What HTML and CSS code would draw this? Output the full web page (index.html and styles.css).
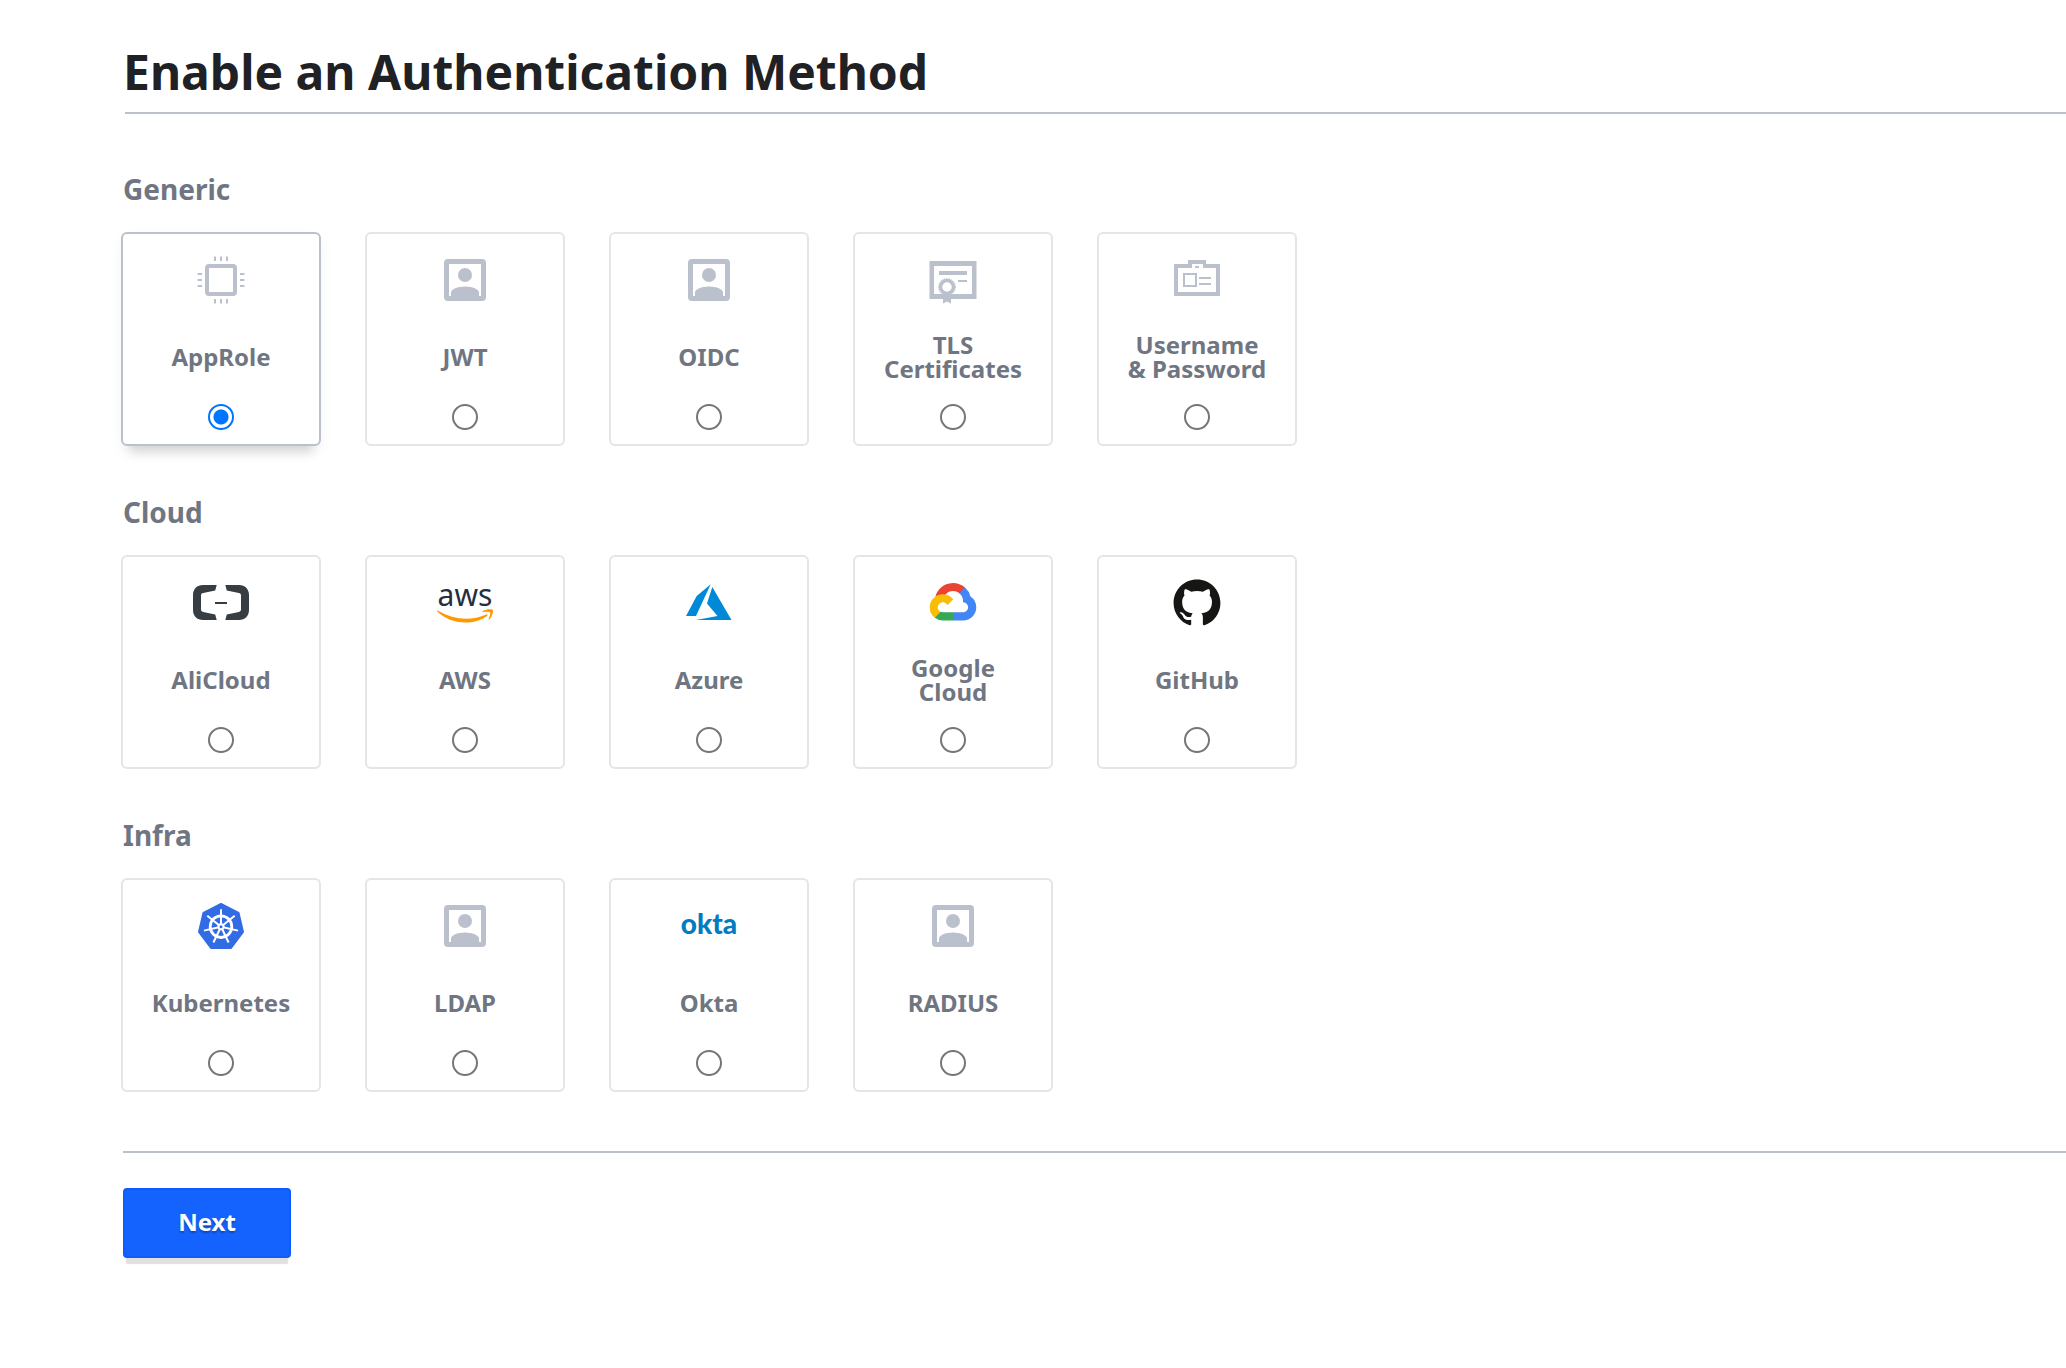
FILE: index.html
```html
<!DOCTYPE html>
<html lang="en">
<head>
<meta charset="utf-8">
<meta name="viewport" content="width=device-width, initial-scale=1">
<title>Enable an Authentication Method</title>
<link rel="stylesheet" href="styles.css">
</head>
<body>
<svg class="sprite" aria-hidden="true">
  <symbol id="user-square" viewBox="0 0 48 48">
    <path fill-rule="evenodd" d="M7 3h34a4 4 0 0 1 4 4v34a4 4 0 0 1-4 4H7a4 4 0 0 1-4-4V7a4 4 0 0 1 4-4zM8 8v32h2v-3.500c0-3.200 6.500-6 14-6s14 2.800 14 6V40h2V8z"/>
    <circle cx="24" cy="19" r="7"/>
  </symbol>
</svg>
<main class="page">
  <header class="page-header">
    <h1 class="title">Enable an Authentication Method</h1>
  </header>
  <form class="methods">
    <section class="group">
      <h2 class="group-title">Generic</h2>
      <div class="cards">
        <label class="card">
          <svg class="icon" viewBox="0 0 48 48" aria-hidden="true">
            <rect x="10" y="10" width="28" height="28" rx="2" fill="none" stroke="currentColor" stroke-width="4"/>
            <path d="M17 .5h2V5h-2zM23 .5h2V5h-2zM29 .5h2V5h-2zM17 43h2v4.500h-2zM23 43h2v4.500h-2zM29 43h2v4.500h-2zM.5 17H5v2H.5zM.5 23H5v2H.5zM.5 29H5v2H.5zM43 17h4.500v2H43zM43 23h4.500v2H43zM43 29h4.500v2H43z"/>
          </svg>
          <span class="name">AppRole</span>
          <input class="radio" type="radio" name="method" value="approle" checked>
        </label>
        <label class="card">
          <svg class="icon" aria-hidden="true"><use href="#user-square"/></svg>
          <span class="name">JWT</span>
          <input class="radio" type="radio" name="method" value="jwt">
        </label>
        <label class="card">
          <svg class="icon" aria-hidden="true"><use href="#user-square"/></svg>
          <span class="name">OIDC</span>
          <input class="radio" type="radio" name="method" value="oidc">
        </label>
        <label class="card">
          <svg class="icon" viewBox="0 0 48 48" aria-hidden="true">
            <path fill-rule="evenodd" d="M.5 5h47v38h-47zM5 10v28h38V10z"/>
            <path d="M10 15h28v4H10zM29 24h9v2h-9zM14 38h8v9.500l-4-2-4 2z"/>
            <circle cx="18" cy="31" r="6.500" fill="#fff" stroke="currentColor" stroke-width="3.500"/>
            <circle cx="18" cy="31" r="8.500" fill="none" stroke="currentColor" stroke-width="1" stroke-dasharray="1.300 1.300"/>
          </svg>
          <span class="name">TLS<br>Certificates</span>
          <input class="radio" type="radio" name="method" value="cert">
        </label>
        <label class="card">
          <svg class="icon" viewBox="0 0 48 48" aria-hidden="true">
            <path fill-rule="evenodd" d="M1 8h14V4h18v4h14v32H1zM5 12v24h38V12H30V8H19v4z"/>
            <path d="M22 10h4v2h-4zM26 21h12v2H26zM26 27h12v2H26z"/>
            <rect x="11" y="18" width="12" height="12" fill="none" stroke="currentColor" stroke-width="2"/>
          </svg>
          <span class="name">Username<br>&amp; Password</span>
          <input class="radio" type="radio" name="method" value="userpass">
        </label>
      </div>
    </section>

    <section class="group">
      <h2 class="group-title">Cloud</h2>
      <div class="cards">
        <label class="card">
          <svg class="icon icon-alicloud" viewBox="0 0 56 48" aria-hidden="true">
            <path d="M23.700 6H10C4 6 0 10 0 16v15c0 6 4 10 10 10h13.700l-1.500-5.500-12-2.600C8.700 32.500 8 31.900 8 30.500v-14c0-1.400.7-2.100 2.200-2.500l12-2.500z"/>
            <path d="M32.300 6H46c6 0 10 4 10 10v15c0 6-4 10-10 10H32.300l1.500-5.500 12-2.600c1.500-.4 2.200-1 2.200-2.400v-14c0-1.400-.7-2.100-2.200-2.500l-12-2.500z"/>
            <path d="M22 23h12v2H22z"/>
          </svg>
          <span class="name">AliCloud</span>
          <input class="radio" type="radio" name="method" value="alicloud">
        </label>
        <label class="card">
          <svg class="icon" viewBox="0 0 56 48" aria-hidden="true">
            <text class="aws-word" x="28" y="27" text-anchor="middle">aws</text>
            <path fill="#ff9900" d="M.3 32.500c-.4-.6.200-1.200.9-.8C10 36.800 20 39.700 29 39.700c7 0 14-1.700 20.300-4.300 1-.4 1.800.7.8 1.500C44 41.300 36 43.500 28.500 43.500 17.500 43.500 7.600 39.500.3 32.500z"/>
            <path fill="#ff9900" d="M46 32.900c-.7.100-.8-.5-.2-.9 3-2.100 8.500-2.200 9.700-1.400 1.300.9-.1 7.200-3.100 9.800-.5.400-1 .2-.8-.4.700-1.700 2.200-5.500 1.500-6.500-.8-1-5-.8-7.100-.6z"/>
          </svg>
          <span class="name">AWS</span>
          <input class="radio" type="radio" name="method" value="aws">
        </label>
        <label class="card">
          <svg class="icon icon-azure" viewBox="0 0 56 48" aria-hidden="true">
            <path d="M29.700 5.300 15.700 17 5 37h10z"/>
            <path d="M31.300 8 50.500 41H15l21.500-4L26 24.500z"/>
          </svg>
          <span class="name">Azure</span>
          <input class="radio" type="radio" name="method" value="azure">
        </label>
        <label class="card">
          <svg class="icon" viewBox="-26 -22 308 264" aria-hidden="true">
            <path fill="#ea4335" d="M170.252 56.819l22.253-22.253 1.483-9.370C153.437-11.677 88.976-7.496 52.420 33.920 42.267 45.423 34.734 59.764 30.717 74.573l7.970-1.123 44.505-7.340 3.436-3.513c19.797-21.742 53.270-24.667 76.128-6.168z"/>
            <path fill="#4285f4" d="M224.205 73.918a100.249 100.249 0 0 0-30.217-48.722l-31.232 31.232a55.515 55.515 0 0 1 20.379 44.037v5.544c15.350 0 27.797 12.445 27.797 27.796 0 15.352-12.446 27.485-27.797 27.485h-55.671l-5.466 5.934v33.340l5.466 5.231h55.670c39.930.311 72.553-31.494 72.864-71.424a72.303 72.303 0 0 0-31.793-60.453"/>
            <path fill="#34a853" d="M71.870 205.796h55.593V161.290H71.870a27.275 27.275 0 0 1-11.400-2.498l-7.887 2.420-22.409 22.253-1.952 7.574a72.228 72.228 0 0 0 43.648 14.757"/>
            <path fill="#fbbc05" d="M71.870 61.426C31.940 61.664-.237 94.228.001 134.158a72.301 72.301 0 0 0 28.222 56.880l32.247-32.246c-13.990-6.322-20.208-22.786-13.887-36.776 6.320-13.990 22.786-20.208 36.775-13.888a27.796 27.796 0 0 1 13.887 13.888l32.248-32.248A72.224 72.224 0 0 0 71.870 61.426"/>
          </svg>
          <span class="name">Google<br>Cloud</span>
          <input class="radio" type="radio" name="method" value="gcp">
        </label>
        <label class="card">
          <svg class="icon icon-github" viewBox="-.2 -.2 16.400 16.400" aria-hidden="true">
            <path d="M8 0C3.580 0 0 3.580 0 8c0 3.540 2.290 6.530 5.470 7.590.4.070.55-.17.55-.38 0-.19-.01-.82-.01-1.490-2.010.37-2.530-.49-2.690-.94-.09-.23-.48-.94-.82-1.130-.28-.15-.68-.52-.01-.53.63-.01 1.080.58 1.230.82.72 1.210 1.870.87 2.330.66.07-.52.28-.87.51-1.070-1.780-.2-3.640-.89-3.640-3.950 0-.87.31-1.590.82-2.150-.08-.2-.36-1.020.08-2.120 0 0 .67-.21 2.200.82.64-.18 1.320-.27 2-.27s1.360.09 2 .27c1.530-1.040 2.200-.82 2.200-.82.44 1.100.16 1.920.08 2.120.51.56.82 1.270.82 2.150 0 3.070-1.870 3.750-3.650 3.950.29.25.54.73.54 1.480 0 1.070-.01 1.930-.01 2.200 0 .21.15.46.55.38A8.010 8.010 0 0 0 16 8c0-4.420-3.580-8-8-8z"/>
          </svg>
          <span class="name">GitHub</span>
          <input class="radio" type="radio" name="method" value="github">
        </label>
      </div>
    </section>

    <section class="group">
      <h2 class="group-title">Infra</h2>
      <div class="cards">
        <label class="card">
          <svg class="icon" viewBox="0 0 48 48" aria-hidden="true">
            <path fill="#326ce5" stroke="#326ce5" stroke-width="2" stroke-linejoin="round" d="M24 2 41.500 10.800 46 30 34 46H14L2 30 6.500 10.800z"/>
            <g transform="translate(24 24.700)" fill="none" stroke="#fff">
              <circle r="10.800" stroke-width="2.800"/>
              <path stroke-width="2" d="M0 0V-17.500M0 0 13.700-10.900M0 0 17 3.900M0 0 7.600 15.800M0 0-7.600 15.800M0 0-17 3.900M0 0-13.700-10.900"/>
              <circle r="2.500" fill="#326ce5" stroke-width="2"/>
            </g>
          </svg>
          <span class="name">Kubernetes</span>
          <input class="radio" type="radio" name="method" value="kubernetes">
        </label>
        <label class="card">
          <svg class="icon" aria-hidden="true"><use href="#user-square"/></svg>
          <span class="name">LDAP</span>
          <input class="radio" type="radio" name="method" value="ldap">
        </label>
        <label class="card">
          <svg class="icon" viewBox="0 0 56 48" aria-hidden="true">
            <text class="okta-word" x="28" y="32" text-anchor="middle">okta</text>
          </svg>
          <span class="name">Okta</span>
          <input class="radio" type="radio" name="method" value="okta">
        </label>
        <label class="card">
          <svg class="icon" aria-hidden="true"><use href="#user-square"/></svg>
          <span class="name">RADIUS</span>
          <input class="radio" type="radio" name="method" value="radius">
        </label>
      </div>
    </section>

    <footer class="actions">
      <button class="next" type="submit">Next</button>
    </footer>
  </form>
</main>
</body>
</html>
```
FILE: styles.css
```css
* {
  box-sizing: border-box;
}

body {
  margin: 0;
  background: #fff;
  color: #6f7682;
  font-family: "Noto Sans", "Open Sans", sans-serif;
}

.sprite {
  display: none;
}

.page {
  padding: 42px 0 80px 123px;
}

.page-header {
  margin-left: 2px;
  padding-bottom: 10px;
  border-bottom: 2px solid #bac1cc;
}

.title {
  margin: 0 0 0 -2px;
  color: #1f2124;
  font-size: 48px;
  font-weight: 700;
  line-height: 60px;
}

.methods {
  display: flex;
  flex-direction: column;
  gap: 48px;
  padding-top: 57px;
}

.group-title {
  margin: 0 0 25px;
  font-size: 28px;
  font-weight: 700;
  line-height: 36px;
}

.cards {
  display: flex;
  flex-wrap: wrap;
  gap: 44px;
  margin-left: -2px;
}

.card {
  display: flex;
  flex-direction: column;
  align-items: center;
  width: 200px;
  padding: 22px 8px 14px;
  border: 2px solid #e5e5e5;
  border-radius: 6px;
  cursor: pointer;
}

.card:has(:checked) {
  border-color: #bac1cc;
  box-shadow: 0 14px 10px -8px rgba(0, 0, 0, 0.14), 0 6px 16px rgba(0, 0, 0, 0.04);
}

.icon {
  width: 56px;
  height: 48px;
  overflow: visible;
  color: #bac1cc;
  fill: currentColor;
}

.icon-alicloud {
  fill: #373d41;
}

.icon-azure {
  fill: #0089d6;
}

.icon-github {
  fill: #161614;
}

.aws-word {
  fill: #252f3e;
  font-size: 30px;
  font-weight: 400;
}

.okta-word {
  fill: #007dc1;
  font-family: Lato, sans-serif;
  font-size: 28px;
  font-weight: 900;
}

.name {
  display: flex;
  align-items: center;
  height: 48px;
  margin: 29px 0 23px;
  font-size: 24px;
  font-weight: 700;
  line-height: 24px;
  text-align: center;
}

.radio {
  width: 26px;
  height: 26px;
  margin: 0;
  border: 2px solid #767676;
  border-radius: 50%;
  background: #fff;
  appearance: none;
}

.radio:checked {
  border-color: #0075ff;
  background: radial-gradient(circle, #0075ff 7px, #fff 8px);
}

.actions {
  margin-top: 11px;
  padding-top: 35px;
  border-top: 2px solid #bac1cc;
}

.next {
  width: 168px;
  height: 70px;
  padding: 0 0 2px;
  border: 2px solid #0f5bff;
  border-radius: 4px;
  background: #1563ff;
  box-shadow: 0 9px 1px -3px #e0e0e0;
  color: #fff;
  font: 700 24px/36px "Noto Sans", "Open Sans", sans-serif;
  text-shadow: 0 2px 2px rgba(0, 0, 0, 0.3);
  cursor: pointer;
}
```
